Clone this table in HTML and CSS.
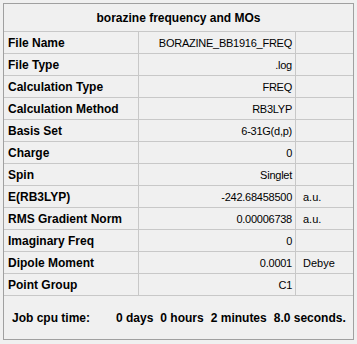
FILE: index.html
```html
<!DOCTYPE html>
<html lang="en">

<head>
    <meta charset="UTF-8">
    <meta name="viewport" content="width=device-width, initial-scale=1.0">
    <title>borazine frequency and MOs</title>
    <link rel="stylesheet" href="styles.css">
</head>

<body>
    <div class="panel">
        <div class="title">borazine frequency and MOs</div>

        <div class="grid">
            <div class="label">File Name</div><div class="value">BORAZINE_BB1916_FREQ</div><div class="unit"></div>
            <div class="label">File Type</div><div class="value">.log</div><div class="unit"></div>
            <div class="label">Calculation Type</div><div class="value">FREQ</div><div class="unit"></div>
            <div class="label">Calculation Method</div><div class="value">RB3LYP</div><div class="unit"></div>
            <div class="label">Basis Set</div><div class="value">6-31G(d,p)</div><div class="unit"></div>
            <div class="label">Charge</div><div class="value">0</div><div class="unit"></div>
            <div class="label">Spin</div><div class="value">Singlet</div><div class="unit"></div>
            <div class="label">E(RB3LYP)</div><div class="value">-242.68458500</div><div class="unit">a.u.</div>
            <div class="label">RMS Gradient Norm</div><div class="value">0.00006738</div><div class="unit">a.u.</div>
            <div class="label">Imaginary Freq</div><div class="value">0</div><div class="unit"></div>
            <div class="label">Dipole Moment</div><div class="value">0.0001</div><div class="unit">Debye</div>
            <div class="label">Point Group</div><div class="value">C1</div><div class="unit"></div>
        </div>

        <div class="cpu">
            <span class="cpu-label">Job cpu time:</span>
            <span>0 days</span>
            <span>0 hours</span>
            <span>2 minutes</span>
            <span>8.0 seconds.</span>
        </div>
    </div>
</body>

</html>
```

FILE: styles.css
```css
* {
    margin: 0;
    padding: 0;
    box-sizing: border-box;
}

body {
    font-family: "Liberation Sans", Arial, sans-serif;
    background-color: #f0f0f0;
    color: #000;
    padding: 3px;
}

.panel {
    width: 351px;
    height: 337px;
    border: 1px solid #a0a0a0;
    background-color: #f0f0f0;
    display: flex;
    flex-direction: column;
}

.title {
    height: 28px;
    border-bottom: 1px solid #c8c8c8;
    font-size: 12px;
    font-weight: bold;
    display: flex;
    align-items: center;
    justify-content: center;
}

.grid {
    display: grid;
    grid-template-columns: 134px 156px 1fr;
    grid-auto-rows: 21px;
    gap: 1px;
    background-color: #c8c8c8;
    border-bottom: 1px solid #c8c8c8;
}

.grid div {
    background-color: #f0f0f0;
    display: flex;
    align-items: center;
}

.label {
    font-size: 12px;
    font-weight: bold;
    padding-left: 4px;
}

.value {
    font-size: 11px;
    letter-spacing: -0.25px;
    justify-content: flex-end;
    padding-right: 3px;
}

.unit {
    font-size: 11px;
    padding-left: 7px;
}

.cpu {
    flex: 1;
    display: flex;
    align-items: center;
    gap: 7px;
    padding-left: 8px;
    font-size: 12px;
    font-weight: bold;
}

.cpu-label {
    width: 97px;
}
```
